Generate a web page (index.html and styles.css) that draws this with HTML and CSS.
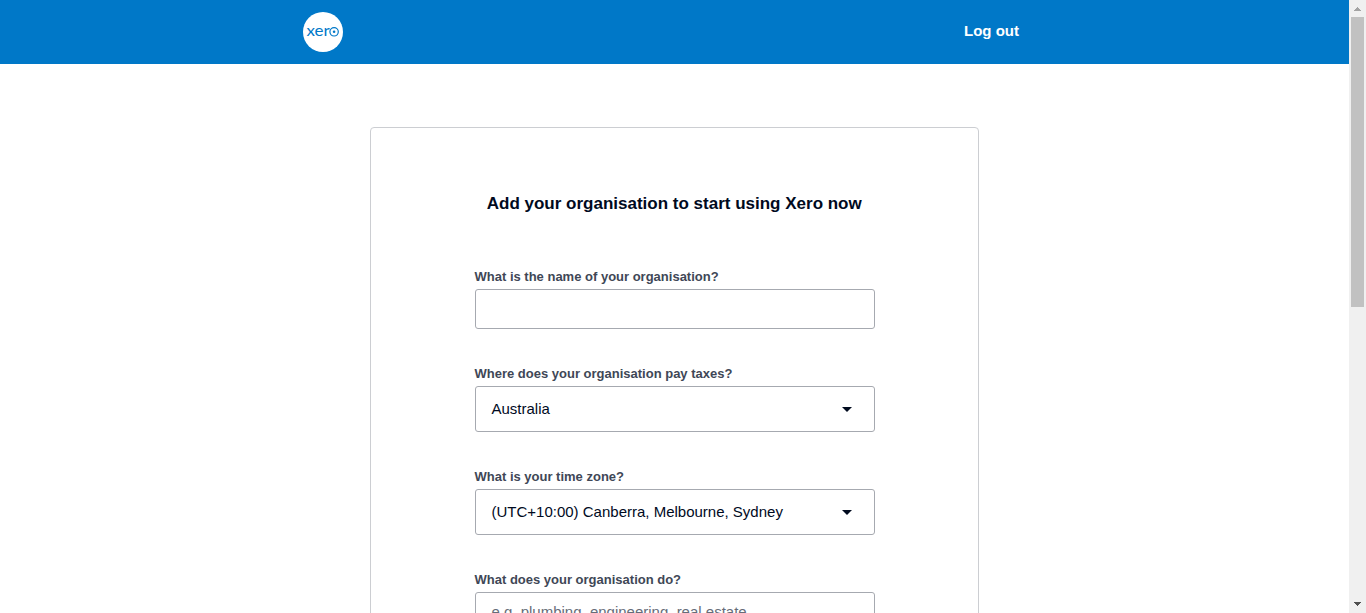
FILE: index.html
```html
<!DOCTYPE html>
<html lang="en">
<head>
<meta charset="utf-8">
<title>Add your organisation | Xero</title>
<link rel="stylesheet" href="styles.css">
</head>
<body>
<div class="viewport">
  <div class="page">
    <header class="header">
      <div class="header-inner">
        <svg class="logo" width="40" height="40" viewBox="0 0 40 40" role="img" aria-label="Xero">
          <circle cx="20" cy="20" r="20" fill="#fff"/>
          <text class="logo-text" x="3.4" y="23.9" textLength="23.2" lengthAdjust="spacingAndGlyphs">xer</text>
          <circle cx="31.1" cy="19.8" r="4.2" fill="none" stroke="#0078c8" stroke-width="1.2"/>
          <circle cx="31.1" cy="19.8" r="1.3" fill="#0078c8"/>
        </svg>
        <a class="logout">Log out</a>
      </div>
    </header>
    <main class="card">
      <h1 class="title">Add your organisation to start using Xero now</h1>
      <form class="form">
        <div class="field">
          <label class="label">What is the name of your organisation?</label>
          <div class="control control-short"></div>
        </div>
        <div class="field">
          <label class="label">Where does your organisation pay taxes?</label>
          <div class="control"><span class="value">Australia</span><svg class="caret" width="10" height="5" viewBox="0 0 10 5"><path d="M0 0h10L5 5z"/></svg></div>
        </div>
        <div class="field">
          <label class="label">What is your time zone?</label>
          <div class="control"><span class="value">(UTC+10:00) Canberra, Melbourne, Sydney</span><svg class="caret" width="10" height="5" viewBox="0 0 10 5"><path d="M0 0h10L5 5z"/></svg></div>
        </div>
        <div class="field">
          <label class="label">What does your organisation do?</label>
          <div class="control control-short"><span class="value placeholder">e.g. plumbing, engineering, real estate</span></div>
        </div>
      </form>
    </main>
  </div>
  <div class="scrollbar">
    <svg class="arrow arrow-up" width="17" height="17" viewBox="0 0 17 17" shape-rendering="crispEdges"><path d="M8 7h1v1h1v1h1v1h1v1H5v-1h1V9h1V8h1z"/></svg>
    <div class="thumb"></div>
    <svg class="arrow arrow-down" width="17" height="17" viewBox="0 0 17 17" shape-rendering="crispEdges"><path d="M5 6h7v1h-1v1h-1v1H9v1H8V9H7V8H6V7H5z"/></svg>
  </div>
</div>
</body>
</html>
```

FILE: styles.css
```css
* { box-sizing: border-box; }
body {
  margin: 0;
  height: 613px;
  overflow: hidden;
  background: #fff;
  font-family: "Liberation Sans", Arial, sans-serif;
  color: #000a1e;
}
.viewport { display: flex; height: 613px; }
.page { flex: 1; height: 613px; overflow: hidden; }
.header { height: 64px; background: #0078c8; }
.header-inner {
  display: flex;
  align-items: center;
  justify-content: space-between;
  width: 743px;
  height: 64px;
  margin: 0 auto;
  padding-right: 27px;
}
.logo { display: block; }
.logo-text { font-family: Lato, sans-serif; font-size: 16px; fill: #0078c8; }
.logout { color: #fff; font-size: 15px; font-weight: 700; line-height: 18px; padding-bottom: 2px; }
.card {
  width: 609px;
  height: 900px;
  margin: 63px auto 0;
  padding: 64px 104px 0 103.5px;
  border: 1px solid #ccced2;
  border-radius: 4px;
}
.title { margin: 0 0 52px; font-size: 17px; line-height: 24px; text-align: center; white-space: nowrap; }
.form { display: flex; flex-direction: column; gap: 36px; }
.label {
  display: block;
  height: 17px;
  margin-bottom: 4px;
  color: #404756;
  font-size: 13px;
  font-weight: 700;
  line-height: 17px;
  white-space: nowrap;
}
.control {
  display: flex;
  align-items: center;
  justify-content: space-between;
  width: 400px;
  height: 46px;
  padding: 0 22px 0 16px;
  border: 1px solid #a6a9b0;
  border-radius: 3px;
  font-size: 15px;
}
.control-short { height: 40px; }
.value { padding-bottom: 2px; }
.caret { fill: #000a1e; }
.placeholder { color: #666c78; }
.scrollbar { display: flex; flex-direction: column; width: 17px; background: #f0f0f0; }
.arrow { display: block; }
.arrow-up { fill: #a3a3a3; }
.arrow-down { margin-top: auto; fill: #505050; }
.thumb { width: 13px; height: 290px; margin: 0 2px; background: #c1c1c1; }
```
